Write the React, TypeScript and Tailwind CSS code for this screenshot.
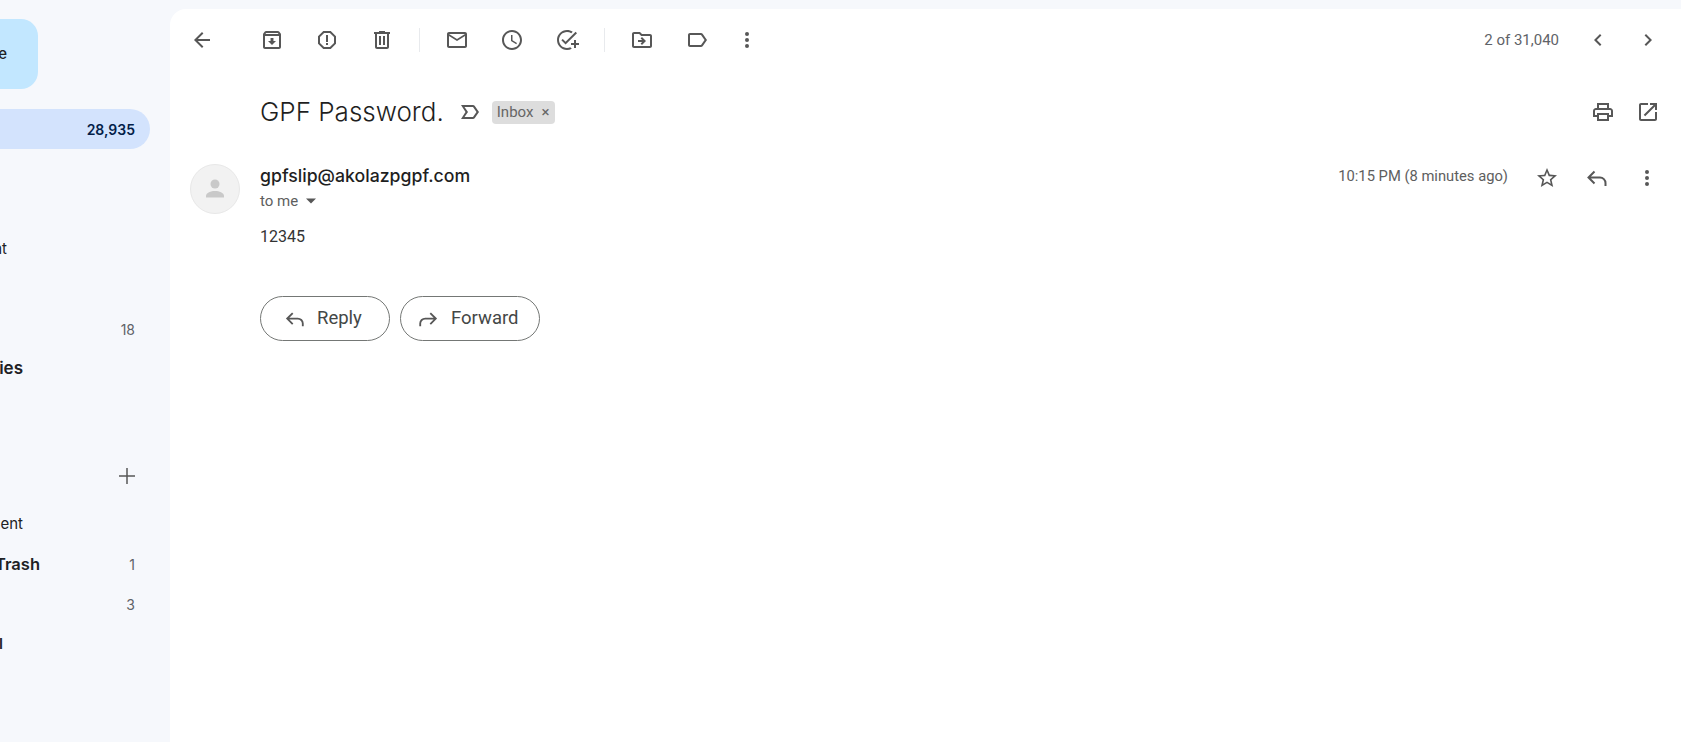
import React from "react";

const sans = "font-['Roboto','Liberation_Sans',sans-serif]";
const display = "font-['Inter','Roboto',sans-serif]";

const Icon = ({ d, size = 24, className = "" }: { d: string; size?: number; className?: string }) => (
  <svg width={size} height={size} viewBox="0 0 24 24" fill="#575757" className={className}>
    <path d={d} />
  </svg>
);

const ReplyIcon = ({ flip = false, size = 22 }: { flip?: boolean; size?: number }) => (
  <svg
    width={size}
    height={size}
    viewBox="0 0 24 24"
    fill="none"
    stroke="#575757"
    strokeWidth="2"
    className={flip ? "-scale-x-100" : ""}
  >
    <path d="M9.5 5.500 3.500 11.500l6 6M3.500 11.500H15a5.500 5.500 0 0 1 5.500 5.500v3" />
  </svg>
);

const icons = {
  back: "M20 11H7.830l5.590-5.590L12 4l-8 8 8 8 1.410-1.410L7.830 13H20v-2z",
  archive:
    "M20.54 5.23l-1.39-1.68C18.88 3.21 18.47 3 18 3H6c-.47 0-.88.21-1.16.55L3.46 5.23C3.17 5.57 3 6.02 3 6.5V19c0 1.1.9 2 2 2h14c1.1 0 2-.9 2-2V6.5c0-.48-.17-.93-.46-1.27zM6.24 5h11.52l.83 1H5.42l.82-1zM5 19V8h14v11H5zm8.45-9h-2.9v3H8l4 4 4-4h-2.55z",
  report:
    "M15.73 3H8.27L3 8.27v7.46L8.27 21h7.46L21 15.73V8.27L15.73 3zM19 14.9L14.9 19H9.1L5 14.9V9.1L9.1 5h5.8L19 9.1v5.8zM11 7h2v7h-2zM11 15h2v2h-2z",
  trash:
    "M15 4V3H9v1H4v2h1v13c0 1.1.9 2 2 2h10c1.1 0 2-.9 2-2V6h1V4h-5zm2 15H7V6h10v13zM9 8h2v9H9zm4 0h2v9h-2z",
  mail: "M20 4H4c-1.1 0-2 .9-2 2v12c0 1.1.9 2 2 2h16c1.1 0 2-.9 2-2V6c0-1.1-.9-2-2-2zm0 14H4V8l8 5 8-5v10zm-8-7L4 6h16l-8 5z",
  clock:
    "M11.99 2C6.47 2 2 6.48 2 12s4.47 10 9.99 10C17.52 22 22 17.52 22 12S17.52 2 11.99 2zM12 20c-4.42 0-8-3.58-8-8s3.58-8 8-8 8 3.58 8 8-3.58 8-8 8zm.5-13H11v6l5.25 3.15.75-1.23-4.5-2.67z",
  task: "M22 5.18 10.59 16.6l-4.24-4.24 1.41-1.41 2.83 2.83 10-10L22 5.18zM12 20c-4.41 0-8-3.59-8-8s3.59-8 8-8c1.57 0 3.04.46 4.28 1.25l1.45-1.45C16.1 2.67 14.13 2 12 2 6.48 2 2 6.48 2 12s4.48 10 10 10c1.73 0 3.36-.44 4.78-1.22l-1.5-1.5c-1 .46-2.11.72-3.28.72zm7-5h-3v2h3v3h2v-3h3v-2h-3v-3h-2v3z",
  folder:
    "M20 6h-8l-2-2H4c-1.1 0-2 .9-2 2v12c0 1.1.9 2 2 2h16c1.1 0 2-.9 2-2V8c0-1.1-.9-2-2-2zm0 12H4V6h5.17l2 2H20v10zm-8.01-9l-1.41 1.41L12.16 12H8v2h4.16l-1.59 1.59L11.99 17 16 13.01 11.99 9z",
  label:
    "M17.63 5.84C17.27 5.33 16.67 5 16 5L5 5.01C3.9 5.01 3 5.9 3 7v10c0 1.1.9 1.99 2 1.99L16 19c.67 0 1.27-.33 1.63-.84L22 12l-4.37-6.16zM16 17H5V7h11l3.55 5L16 17z",
  more: "M12 4a2 2 0 1 1 0 4 2 2 0 0 1 0-4zm0 6a2 2 0 1 1 0 4 2 2 0 0 1 0-4zm0 6a2 2 0 1 1 0 4 2 2 0 0 1 0-4z",
  prev: "M15.41 7.41 14 6l-6 6 6 6 1.41-1.41L10.83 12z",
  next: "M8.59 16.59 10 18l6-6-6-6-1.41 1.41L13.17 12z",
  print:
    "M19 8h-1V3H6v5H5c-1.66 0-3 1.34-3 3v6h4v4h12v-4h4v-6c0-1.66-1.34-3-3-3zM8 5h8v3H8V5zm8 12v2H8v-4h8v2zm2-2v-2H6v2H4v-4c0-.55.45-1 1-1h14c.55 0 1 .45 1 1v4h-2z",
  open: "M19 19H5V5h7V3H5c-1.11 0-2 .9-2 2v14c0 1.1.89 2 2 2h14c1.1 0 2-.9 2-2v-7h-2v7zM14 3v2h3.59l-9.83 9.83 1.41 1.41L19 6.41V10h2V3h-7z",
  star: "M22 9.24l-7.19-.62L12 2 9.19 8.63 2 9.24l5.46 4.73L5.82 21 12 17.27 18.18 21l-1.63-7.03L22 9.24zM12 15.4l-3.76 2.27 1-4.28-3.32-2.88 4.38-.38L12 6.1l1.71 4.04 4.38.38-3.32 2.88 1 4.28L12 15.4z",
  important:
    "M15 19H3l4.5-7L3 5h12c.65 0 1.26.31 1.63.84L21 12l-4.37 6.16c-.37.52-.98.84-1.63.84zm-8.5-2H15l3.5-5L15 7H6.5l3.5 5-3.5 5z",
  plus: "M20 12.75h-7.25V20h-1.5v-7.25H4v-1.5h7.25V4h1.5v7.25H20z",
};

const Cell = ({ d, className = "w-[55px]" }: { d: string; className?: string }) => (
  <div className={`flex h-10 shrink-0 items-center justify-center ${className}`}>
    <Icon d={d} />
  </div>
);

const Divider = () => <div className="h-6 w-px bg-[#e8eaed]" />;

const Sidebar = () => (
  <aside className={`flex w-[170px] shrink-0 flex-col overflow-hidden pt-[19px] text-[15px] text-[#202124] ${display}`}>
    <div className="flex h-[70px] w-[38px] items-center rounded-r-[17px] bg-[#c2e7ff]">
      <span className="-ml-[93px] w-[100px] shrink-0 text-right font-medium">Compose</span>
    </div>
    <div className="mt-5 flex h-10 w-[150px] items-center justify-end rounded-r-full bg-[#d3e3fd] pr-[15px] text-[14px] font-semibold text-[#041e49]">
      28,935
    </div>
    <div className="mt-[80px] flex h-10 items-center">
      <span className="-ml-[93px] w-[100px] shrink-0 text-right">Important</span>
    </div>
    <div className="mt-10 flex h-10 items-center justify-end pr-[35px] text-[14px] text-[#5f6368]">18</div>
    <div className="flex h-10 items-center">
      <span className="-ml-[77px] w-[100px] shrink-0 text-right text-[17px] font-semibold">Categories</span>
    </div>
    <div className="mt-[67px] flex h-10 items-center justify-end pr-[31px]">
      <Icon d={icons.plus} size={24} />
    </div>
    <div className="mt-2 flex h-10 items-center">
      <span className="-ml-[77px] w-[100px] shrink-0 text-right">Sent</span>
    </div>
    <div className="flex h-10 items-center justify-between pr-[35px]">
      <span className="-ml-[60px] w-[100px] shrink-0 text-right text-[16.500px] font-semibold">Trash</span>
      <span className="text-[14px] font-normal text-[#5f6368]">1</span>
    </div>
    <div className="flex h-10 items-center justify-end pr-[35px] text-[14px] text-[#5f6368]">3</div>
    <div className="flex h-10 items-center">
      <span className="-ml-[97px] w-[100px] shrink-0 text-right font-semibold">Mail</span>
    </div>
  </aside>
);

const Toolbar = () => (
  <div className="flex h-[62px] items-center pl-[4px] pr-[8px]">
    <Cell d={icons.back} />
    <div className="w-[15px]" />
    <Cell d={icons.archive} />
    <Cell d={icons.report} />
    <Cell d={icons.trash} />
    <div className="flex w-5 justify-center"><Divider /></div>
    <Cell d={icons.mail} />
    <Cell d={icons.clock} />
    <Cell d={icons.task} />
    <div className="flex w-5 justify-center"><Divider /></div>
    <Cell d={icons.folder} />
    <Cell d={icons.label} />
    <Cell d={icons.more} className="w-[45px]" />
    <div className="ml-auto mr-[14px] text-[15px] text-[#5f6368]">2 of 31,040</div>
    <Cell d={icons.prev} className="w-[50px]" />
    <Cell d={icons.next} className="w-[50px]" />
  </div>
);

const Subject = () => (
  <div className="mt-[21px] flex h-[40px] items-center pl-[90px] pr-[11px]">
    <h1 className={`text-[26px] font-light leading-8 text-[#1f1f1f] ${display}`}>GPF Password.</h1>
    <Icon d={icons.important} className="ml-[14px]" />
    <div className="ml-[10px] flex h-[23px] w-[63px] items-center rounded-[4px] bg-[#dddddd] pl-[5px] text-[15px] text-[#666666]">
      Inbox
      <span className="ml-[8px] text-[15px] leading-none">×</span>
    </div>
    <div className="ml-auto flex">
      <Cell d={icons.print} className="w-[45px]" />
      <Cell d={icons.open} className="w-[45px]" />
    </div>
  </div>
);

const Message = () => (
  <div className="mt-[32px] flex pl-5 pr-[9px]">
    <div className="flex h-[50px] w-[50px] shrink-0 items-center justify-center rounded-full border border-[#e8e8e8] bg-[#f2f2f2]">
      <svg width="24" height="24" viewBox="0 0 24 24" fill="#c9c9c9">
        <circle cx="12" cy="7" r="4.5" />
        <path d="M3 19c0-3.500 5-5 9-5s9 1.500 9 5v1.500H3z" />
      </svg>
    </div>
    <div className="ml-5 flex-1">
      <div className="flex items-center">
        <div className="flex-1">
          <div className={`text-[17.700px] font-medium leading-6 text-[#1f1f1f] ${display}`}>gpfslip@akolazpgpf.com</div>
          <div className="mt-[3px] flex items-center text-[15px] leading-5 text-[#5e5e5e]">
            to me
            <svg width="16" height="16" viewBox="0 0 16 16" fill="#575757" className="ml-[5px]">
              <path d="M3 5.500h10l-5 5z" />
            </svg>
          </div>
        </div>
        <div className="-mt-[20px] flex items-center">
          <span className="-mt-[2px] mr-[14px] text-[14.750px] text-[#5e5e5e]">10:15 PM (8 minutes ago)</span>
          <Cell d={icons.star} className="w-[50px]" />
          <div className="flex h-10 w-[50px] items-center justify-center"><ReplyIcon size={24} /></div>
          <Cell d={icons.more} className="w-[50px]" />
        </div>
      </div>
      <div className="mt-[16px] text-[16px] leading-5 text-[#333333]">12345</div>
      <div className="mt-[49px] flex gap-[10px]">
        <button className="flex h-[45px] w-[130px] items-center rounded-full border border-[#747775] pl-[23px] text-[18.500px] text-[#444746]">
          <ReplyIcon />
          <span className="ml-[11px]">Reply</span>
        </button>
        <button className="flex h-[45px] w-[140px] items-center rounded-full border border-[#747775] pl-[16px] text-[18.500px] text-[#444746]">
          <ReplyIcon flip />
          <span className="ml-[12px]">Forward</span>
        </button>
      </div>
    </div>
  </div>
);

export default function App() {
  return (
    <div className={`flex h-screen overflow-hidden bg-[#f6f8fc] ${sans}`}>
      <Sidebar />
      <main className="mt-[9px] flex-1 rounded-tl-2xl bg-white">
        <Toolbar />
        <Subject />
        <Message />
      </main>
    </div>
  );
}
